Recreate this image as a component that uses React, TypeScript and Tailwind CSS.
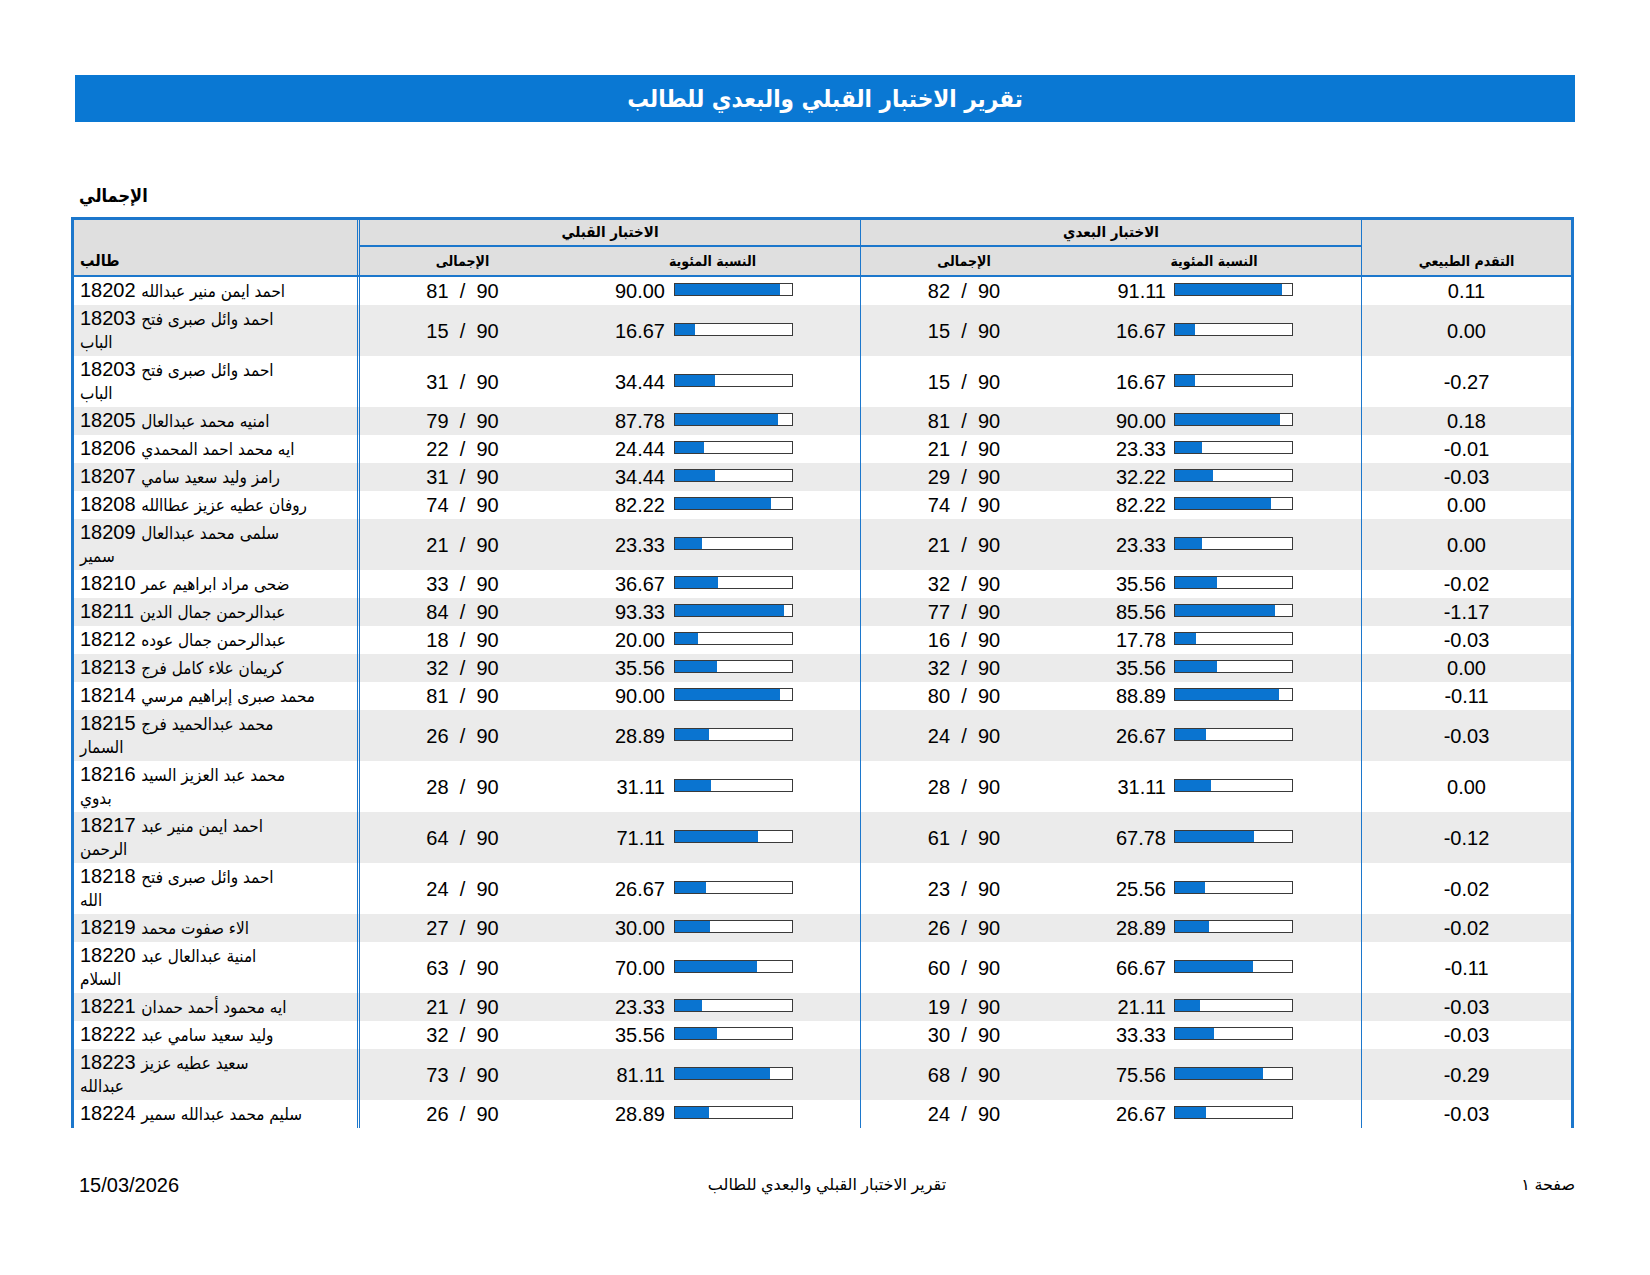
import React from "react";

type Row = {
  id: string;
  l1: string;
  l2?: string;
  preT: number;
  preP: string;
  postT: number;
  postP: string;
  prog: string;
};

const rows: Row[] = [
  { id: "18202", l1: "احمد ايمن منير عبدالله", preT: 81, preP: "90.00", postT: 82, postP: "91.11", prog: "0.11" },
  { id: "18203", l1: "احمد وائل صبرى فتح", l2: "الباب", preT: 15, preP: "16.67", postT: 15, postP: "16.67", prog: "0.00" },
  { id: "18203", l1: "احمد وائل صبرى فتح", l2: "الباب", preT: 31, preP: "34.44", postT: 15, postP: "16.67", prog: "-0.27" },
  { id: "18205", l1: "امنيه محمد عبدالعال", preT: 79, preP: "87.78", postT: 81, postP: "90.00", prog: "0.18" },
  { id: "18206", l1: "ايه محمد احمد المحمدي", preT: 22, preP: "24.44", postT: 21, postP: "23.33", prog: "-0.01" },
  { id: "18207", l1: "رامز وليد سعيد سامي", preT: 31, preP: "34.44", postT: 29, postP: "32.22", prog: "-0.03" },
  { id: "18208", l1: "روفان عطيه عزيز عطاالله", preT: 74, preP: "82.22", postT: 74, postP: "82.22", prog: "0.00" },
  { id: "18209", l1: "سلمى محمد عبدالعال", l2: "سمير", preT: 21, preP: "23.33", postT: 21, postP: "23.33", prog: "0.00" },
  { id: "18210", l1: "ضحى مراد ابراهيم عمر", preT: 33, preP: "36.67", postT: 32, postP: "35.56", prog: "-0.02" },
  { id: "18211", l1: "عبدالرحمن جمال الدين", preT: 84, preP: "93.33", postT: 77, postP: "85.56", prog: "-1.17" },
  { id: "18212", l1: "عبدالرحمن جمال عوده", preT: 18, preP: "20.00", postT: 16, postP: "17.78", prog: "-0.03" },
  { id: "18213", l1: "كريمان علاء كامل فرج", preT: 32, preP: "35.56", postT: 32, postP: "35.56", prog: "0.00" },
  { id: "18214", l1: "محمد صبرى إبراهيم مرسي", preT: 81, preP: "90.00", postT: 80, postP: "88.89", prog: "-0.11" },
  { id: "18215", l1: "محمد عبدالحميد فرج", l2: "السمار", preT: 26, preP: "28.89", postT: 24, postP: "26.67", prog: "-0.03" },
  { id: "18216", l1: "محمد عبد العزيز السيد", l2: "بدوي", preT: 28, preP: "31.11", postT: 28, postP: "31.11", prog: "0.00" },
  { id: "18217", l1: "احمد ايمن منير عبد", l2: "الرحمن", preT: 64, preP: "71.11", postT: 61, postP: "67.78", prog: "-0.12" },
  { id: "18218", l1: "احمد وائل صبرى فتح", l2: "الله", preT: 24, preP: "26.67", postT: 23, postP: "25.56", prog: "-0.02" },
  { id: "18219", l1: "الاء صفوت محمد", preT: 27, preP: "30.00", postT: 26, postP: "28.89", prog: "-0.02" },
  { id: "18220", l1: "امنية عبدالعال عبد", l2: "السلام", preT: 63, preP: "70.00", postT: 60, postP: "66.67", prog: "-0.11" },
  { id: "18221", l1: "ايه محمود أحمد حمدان", preT: 21, preP: "23.33", postT: 19, postP: "21.11", prog: "-0.03" },
  { id: "18222", l1: "وليد سعيد سامي عبد", preT: 32, preP: "35.56", postT: 30, postP: "33.33", prog: "-0.03" },
  { id: "18223", l1: "سعيد عطيه عزيز", l2: "عبدالله", preT: 73, preP: "81.11", postT: 68, postP: "75.56", prog: "-0.29" },
  { id: "18224", l1: "سليم محمد عبدالله سمير", preT: 26, preP: "28.89", postT: 24, postP: "26.67", prog: "-0.03" },
];

const AR = { fontFamily: '"DejaVu Sans Condensed", "DejaVu Sans", sans-serif' };

function Bar({ pct }: { pct: number }) {
  return (
    <div className="w-[119px] h-[13px] border border-[#3a3a3a] bg-white -mt-[3px] flex">
      <div className="h-full bg-[#0a74d0]" style={{ width: `${pct}%` }} />
    </div>
  );
}

export default function App() {
  return (
    <div
      className="w-[1650px] h-[1275px] bg-white text-black overflow-hidden"
      style={{ fontFamily: '"Liberation Sans", "DejaVu Sans", Arial, sans-serif' }}
    >
      <div className="pt-[75px] pl-[75px]">
        <div
          className="w-[1500px] h-[47px] bg-[#0a78d3] flex items-center justify-center text-white text-[24px] font-bold"
          dir="rtl"
          style={AR}
        >
          تقرير الاختبار القبلي والبعدي للطالب
        </div>
      </div>

      <div className="mt-[63px] pl-[79px] h-[22px] leading-[22px] text-[18px] font-bold" style={AR}>
        <span dir="rtl">الإجمالي</span>
      </div>

      <div className="mt-[10px] ml-[71px] w-[1503px] border-x-[3px] border-t-[3px] border-[#1c77cc]">
        {/* header */}
        <div className="flex h-[57px] border-b-2 border-[#1c77cc] bg-[#dfdfdf] font-bold text-[14px]" style={AR}>
          <div className="w-[286px] border-r-[3px] border-double border-[#1c77cc] flex flex-col justify-end pl-[6px]">
            <div className="h-[27px] leading-[26px] text-[16px]" dir="rtl" style={{ textAlign: "left" }}>
              طالب
            </div>
          </div>
          <div className="w-[501px] border-r border-[#1c77cc] flex flex-col">
            <div className="h-[27px] border-b-2 border-[#1c77cc] flex items-center justify-center text-[15px]" dir="rtl">
              الاختبار القبلي
            </div>
            <div className="flex-1 flex">
              <div className="w-[205px] flex items-center justify-center" dir="rtl">الإجمالى</div>
              <div className="flex-1 flex items-center justify-center" dir="rtl">النسبة المئوية</div>
            </div>
          </div>
          <div className="w-[501px] border-r border-[#1c77cc] flex flex-col">
            <div className="h-[27px] border-b-2 border-[#1c77cc] flex items-center justify-center text-[15px]" dir="rtl">
              الاختبار البعدي
            </div>
            <div className="flex-1 flex">
              <div className="w-[206px] flex items-center justify-center" dir="rtl">الإجمالى</div>
              <div className="flex-1 flex items-center justify-center" dir="rtl">النسبة المئوية</div>
            </div>
          </div>
          <div className="w-[209px] flex flex-col justify-end">
            <div className="h-[28px] flex items-center justify-center" dir="rtl">
              التقدم الطبيعي
            </div>
          </div>
        </div>

        {/* body */}
        {rows.map((r, i) => (
          <div
            key={i}
            className={`flex text-[20px] ${r.l2 ? "h-[51px]" : "h-[28px]"} ${i % 2 === 1 ? "bg-[#ebebeb]" : "bg-white"}`}
          >
            <div className="w-[286px] border-r-[3px] border-double border-[#1c77cc] pl-[6px] flex flex-col justify-center leading-[23px]">
              <div dir="ltr" className="whitespace-nowrap">
                {r.id}{" "}
                <span className="text-[17px]" style={AR}>
                  {r.l1}
                </span>
              </div>
              {r.l2 && (
                <div dir="ltr" className="whitespace-nowrap text-[17px]" style={AR}>
                  {r.l2}
                </div>
              )}
            </div>
            <div className="w-[205px] flex items-center justify-center whitespace-pre">
              {`${r.preT}  /  90`}
            </div>
            <div className="w-[296px] border-r border-[#1c77cc] flex items-center">
              <div className="w-[100px] text-right">{r.preP}</div>
              <div className="ml-[9px]">
                <Bar pct={parseFloat(r.preP)} />
              </div>
            </div>
            <div className="w-[206px] flex items-center justify-center whitespace-pre">
              {`${r.postT}  /  90`}
            </div>
            <div className="w-[295px] border-r border-[#1c77cc] flex items-center">
              <div className="w-[99px] text-right">{r.postP}</div>
              <div className="ml-[8px]">
                <Bar pct={parseFloat(r.postP)} />
              </div>
            </div>
            <div className="w-[209px] flex items-center justify-center">{r.prog}</div>
          </div>
        ))}
      </div>

      <div className="mt-[42px] pl-[79px] pr-[75px] grid grid-cols-3 items-center h-[24px]">
        <div className="text-[20px]">15/03/2026</div>
        <div className="text-center text-[16px]" dir="rtl">
          تقرير الاختبار القبلي والبعدي للطالب
        </div>
        <div className="text-right text-[16px]">
          <span dir="rtl">صفحة ١</span>
        </div>
      </div>
    </div>
  );
}
